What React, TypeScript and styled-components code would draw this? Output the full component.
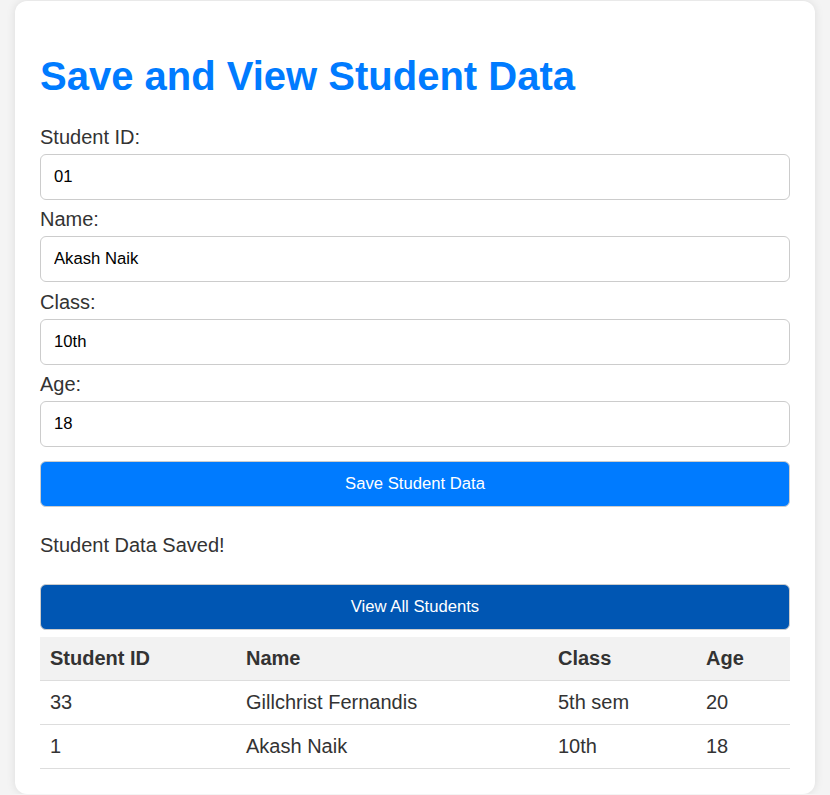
import React, { useState } from 'react'
import { createGlobalStyle, styled, css } from 'styled-components'

const GlobalStyle = createGlobalStyle`
  html, body {
    margin: 0;
    padding: 0;
    background-color: #f4f4f4;
    font-family: "Liberation Sans", Arial, sans-serif;
    color: #333;
  }
`

const Card = styled.div`
  width: 800px;
  box-sizing: border-box;
  margin: 1px auto 0;
  padding: 25px;
  background-color: #fff;
  border-radius: 12px;
  box-shadow: 0 0 10px rgba(0, 0, 0, 0.1);
`

const Title = styled.h1`
  margin: 27px 0;
  font-size: 40px;
  line-height: 46px;
  font-weight: bold;
  color: #007bff;
`

const Form = styled.form`
  display: flex;
  flex-direction: column;
`

const Label = styled.label`
  display: block;
  font-size: 20px;
  line-height: 23px;
  color: #333;
`

const Input = styled.input`
  box-sizing: border-box;
  width: 100%;
  height: 46px;
  margin: 5px 0 8.33px;
  padding: 0 13px;
  border: 1px solid #ccc;
  border-radius: 6px;
  font-family: "Liberation Sans", Arial, sans-serif;
  font-size: 16.67px;
  color: #000;
  background: #fff;
  outline: none;
`

interface ButtonProps {
  $tone?: 'primary' | 'dark';
}

const Button = styled.button<ButtonProps>`
  box-sizing: border-box;
  width: 100%;
  height: 46px;
  margin: 6px 0 7px;
  border: 1px solid #ccc;
  border-radius: 6px;
  background-color: #007bff;
  color: #fff;
  font-family: "Liberation Sans", Arial, sans-serif;
  font-size: 16.67px;
  cursor: pointer;
  ${props => props.$tone === 'dark' && css`
    background-color: #0056b3;
    margin-top: 7px;
  `}
`

const Message = styled.p`
  margin: 20px 0;
  font-size: 20px;
  line-height: 23px;
`

const Table = styled.table`
  width: 100%;
  border-collapse: collapse;
  font-size: 20px;
  line-height: 23px;

  th, td {
    padding: 10px;
    text-align: left;
    border-bottom: 1px solid #ddd;
  }
  th {
    background-color: #f2f2f2;
    font-weight: bold;
  }
`

const fields = [
  { id: 'sid', label: 'Student ID:', value: '01' },
  { id: 'name', label: 'Name:', value: 'Akash Naik' },
  { id: 'cls', label: 'Class:', value: '10th' },
  { id: 'age', label: 'Age:', value: '18' },
]

const students = [
  { id: '33', name: 'Gillchrist Fernandis', cls: '5th sem', age: '20' },
  { id: '1', name: 'Akash Naik', cls: '10th', age: '18' },
]

export default function App() {
  const [values, setValues] = useState<Record<string, string>>(
    Object.fromEntries(fields.map(f => [f.id, f.value]))
  )

  return (
    <>
      <GlobalStyle />
      <Card>
        <Title>Save and View Student Data</Title>
        <Form onSubmit={e => e.preventDefault()}>
          {fields.map(f => (
            <React.Fragment key={f.id}>
              <Label htmlFor={f.id}>{f.label}</Label>
              <Input
                id={f.id}
                value={values[f.id]}
                onChange={e => setValues({ ...values, [f.id]: e.target.value })}
              />
            </React.Fragment>
          ))}
          <Button type="submit">Save Student Data</Button>
          <Message>Student Data Saved!</Message>
          <Button type="button" $tone="dark">View All Students</Button>
        </Form>
        <Table>
          <colgroup>
            <col style={{ width: 196 }} />
            <col style={{ width: 312 }} />
            <col style={{ width: 148 }} />
            <col style={{ width: 94 }} />
          </colgroup>
          <thead>
            <tr>
              <th>Student ID</th>
              <th>Name</th>
              <th>Class</th>
              <th>Age</th>
            </tr>
          </thead>
          <tbody>
            {students.map(s => (
              <tr key={s.id}>
                <td>{s.id}</td>
                <td>{s.name}</td>
                <td>{s.cls}</td>
                <td>{s.age}</td>
              </tr>
            ))}
          </tbody>
        </Table>
      </Card>
    </>
  )
}
